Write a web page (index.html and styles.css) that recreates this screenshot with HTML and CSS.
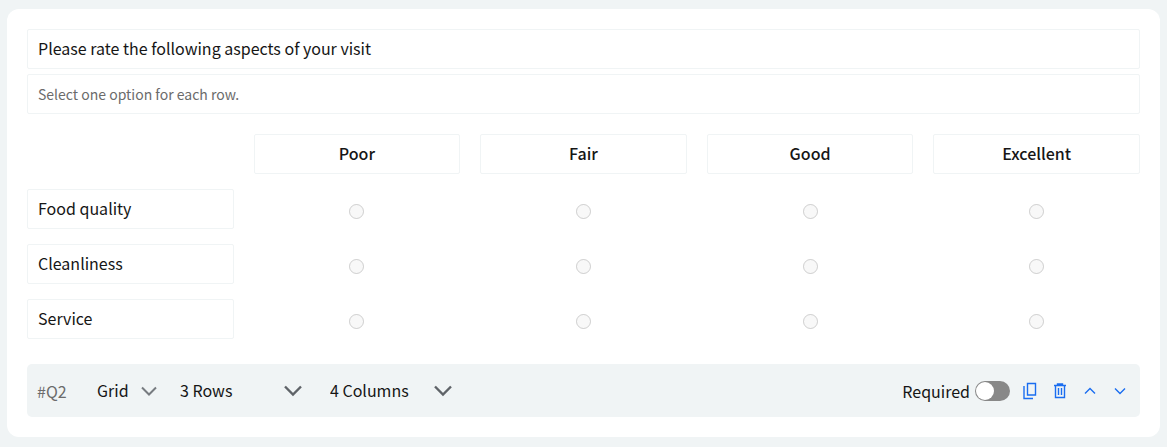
FILE: index.html
```html
<!DOCTYPE html>
<html lang="en">
<head>
    <meta charset="UTF-8">
    <meta name="viewport" content="width=device-width, initial-scale=1.0">
    <title>Survey Editor</title>
    <link rel="stylesheet" href="styles.css">
</head>
<body>

    <main class="question">
        <input type="text" class="field" aria-label="Question title" value="Please rate the following aspects of your visit">
        <input type="text" class="field description" aria-label="Question description" value="Select one option for each row.">

        <table class="matrix">
            <thead>
                <tr>
                    <td></td>
                    <th><input type="text" class="field heading" aria-label="Column 1" value="Poor"></th>
                    <th><input type="text" class="field heading" aria-label="Column 2" value="Fair"></th>
                    <th><input type="text" class="field heading" aria-label="Column 3" value="Good"></th>
                    <th><input type="text" class="field heading" aria-label="Column 4" value="Excellent"></th>
                </tr>
            </thead>
            <tbody>
                <tr>
                    <th><input type="text" class="field" aria-label="Row 1" value="Food quality"></th>
                    <td><input type="radio" class="option" name="row1" aria-label="Food quality: Poor" disabled></td>
                    <td><input type="radio" class="option" name="row1" aria-label="Food quality: Fair" disabled></td>
                    <td><input type="radio" class="option" name="row1" aria-label="Food quality: Good" disabled></td>
                    <td><input type="radio" class="option" name="row1" aria-label="Food quality: Excellent" disabled></td>
                </tr>
                <tr>
                    <th><input type="text" class="field" aria-label="Row 2" value="Cleanliness"></th>
                    <td><input type="radio" class="option" name="row2" aria-label="Cleanliness: Poor" disabled></td>
                    <td><input type="radio" class="option" name="row2" aria-label="Cleanliness: Fair" disabled></td>
                    <td><input type="radio" class="option" name="row2" aria-label="Cleanliness: Good" disabled></td>
                    <td><input type="radio" class="option" name="row2" aria-label="Cleanliness: Excellent" disabled></td>
                </tr>
                <tr>
                    <th><input type="text" class="field" aria-label="Row 3" value="Service"></th>
                    <td><input type="radio" class="option" name="row3" aria-label="Service: Poor" disabled></td>
                    <td><input type="radio" class="option" name="row3" aria-label="Service: Fair" disabled></td>
                    <td><input type="radio" class="option" name="row3" aria-label="Service: Good" disabled></td>
                    <td><input type="radio" class="option" name="row3" aria-label="Service: Excellent" disabled></td>
                </tr>
            </tbody>
        </table>

        <div class="toolbar">
            <span class="number">#Q2</span>
            <select class="picker type" aria-label="Question type">
                <option>Grid</option>
            </select>
            <select class="picker count" aria-label="Number of rows">
                <option>3 Rows</option>
            </select>
            <select class="picker count" aria-label="Number of columns">
                <option>4 Columns</option>
            </select>

            <div class="actions">
                <label for="required">Required</label>
                <input type="checkbox" class="switch" id="required">
                <button type="button" class="icon" aria-label="Duplicate">
                    <svg width="16" height="18" viewBox="0 0 16 18">
                        <path d="M5.500 1.500h8v11.500h-8zM2 4v12.500h9"/>
                    </svg>
                </button>
                <button type="button" class="icon" aria-label="Delete">
                    <svg width="16" height="18" viewBox="0 0 16 18">
                        <path d="M2 3.500h12M5.500 3V2h5v1M3.500 3.500v12h9v-12M6.500 6v7M9.500 6v7"/>
                    </svg>
                </button>
                <button type="button" class="icon" aria-label="Move up">
                    <svg width="16" height="18" viewBox="0 0 16 18">
                        <path d="M3 11.500L8 6.500l5 5"/>
                    </svg>
                </button>
                <button type="button" class="icon" aria-label="Move down">
                    <svg width="16" height="18" viewBox="0 0 16 18">
                        <path d="M3 6.500l5 5 5-5"/>
                    </svg>
                </button>
            </div>
        </div>
    </main>

</body>
</html>
```
FILE: styles.css
```css
* {
    box-sizing: border-box;
}

body {
    margin: 9px 7px;
    background-color: #f0f4f5;
    color: #161616;
    font-family: "Noto Sans CJK SC", "Noto Sans", sans-serif;
    font-size: 16px;
    line-height: 24px;
}

input,
select,
button {
    margin: 0;
    color: inherit;
    font: inherit;
}

.question {
    padding: 20px;
    border-radius: 12px;
    background-color: #fff;
}

.field {
    display: block;
    width: 100%;
    height: 40px;
    padding: 0 10px 2px;
    border: 1px solid #f0f4f5;
    border-radius: 2px;
    background-color: #fff;
}

.description {
    margin-top: 5px;
    padding-bottom: 0;
    color: #6b6b6b;
    font-size: 14px;
}

.heading {
    font-weight: 500;
    text-align: center;
}

/* Rating grid */
.matrix,
.matrix thead,
.matrix tbody {
    display: grid;
    gap: 15px;
}

.matrix {
    margin: 20px 0 25px;
}

.matrix tr {
    display: grid;
    grid-template-columns: repeat(5, minmax(0, 1fr));
    gap: 20px;
}

.matrix th,
.matrix td {
    padding: 0;
    font-weight: 400;
}

.matrix tbody td {
    display: flex;
    align-items: center;
    justify-content: center;
    padding-top: 5px;
}

.option {
    width: 15px;
    height: 15px;
}

/* Bottom bar */
.toolbar {
    display: flex;
    align-items: center;
    height: 53px;
    padding: 0 5px 0 10px;
    border-radius: 5px;
    background-color: #f0f4f5;
}

.number {
    width: 60px;
    color: #6b6b6b;
}

.picker {
    appearance: none;
    height: 30px;
    padding: 0 0 2px;
    border: none;
    background: url("data:image/svg+xml,%3Csvg xmlns='http://www.w3.org/2000/svg' width='18' height='12' fill='none' stroke='%235f6368' stroke-width='2.4'%3E%3Cpath d='M1 1.500l8 8 8-8'/%3E%3C/svg%3E") no-repeat right center;
}

.type {
    width: 60px;
    margin-right: 23px;
    background-image: url("data:image/svg+xml,%3Csvg xmlns='http://www.w3.org/2000/svg' width='16' height='10' fill='none' stroke='%23777b80' stroke-width='2'%3E%3Cpath d='M1 1.500l7 7 7-7'/%3E%3C/svg%3E");
}

.count {
    width: 122px;
    margin-right: 28px;
}

.actions {
    display: flex;
    align-items: center;
    margin-left: auto;
}

.switch {
    appearance: none;
    display: flex;
    width: 35px;
    height: 20px;
    margin: 0 5px;
    padding: 1px;
    border-radius: 10px;
    background-color: #888;
    cursor: pointer;
}

.switch::before {
    content: "";
    width: 18px;
    height: 18px;
    border-radius: 50%;
    background-color: #fff;
}

.switch:checked {
    justify-content: flex-end;
    background-color: #0f62fe;
}

.icon {
    display: flex;
    align-items: center;
    justify-content: center;
    width: 30px;
    height: 30px;
    padding: 0;
    border: none;
    background: none;
    color: #1a6df0;
    cursor: pointer;
}

.icon svg {
    fill: none;
    stroke: currentColor;
    stroke-width: 1.4;
}
```
